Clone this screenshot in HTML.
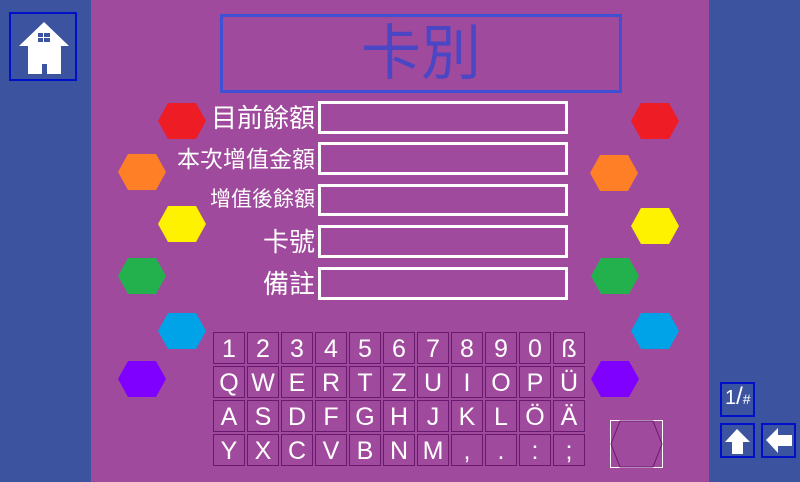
<!DOCTYPE html><html><head><meta charset="utf-8"><style>
body{margin:0;width:800px;height:482px;overflow:hidden;background:#a04a9e;position:relative;font-family:"Liberation Sans","Noto Sans CJK TC",sans-serif}
.a{position:absolute}
.side{background:#3c539f;top:0;height:482px;width:91px}
.k{position:absolute;width:32px;height:32px;border:1px solid #6a1a6e;box-sizing:border-box;color:#fff;font-size:25px;text-align:center;line-height:32px}
.in{position:absolute;left:318px;width:250px;border:3px solid #fff;box-sizing:border-box}
.lb{position:absolute;right:485px;color:#fff;white-space:nowrap;line-height:1}
.btn{position:absolute;border:2px solid #0010c8;box-sizing:border-box}
</style></head><body>
<div class="a side" style="left:0"></div><div class="a side" style="left:709px"></div>
<div class="btn" style="left:9px;top:12px;width:68px;height:69px">
<svg width="64" height="65" viewBox="0 0 64 65"><polygon points="8,32 33,8 58,32 50,32 50,60 17,60 17,32" fill="#fff"/><rect x="27" y="19" width="12" height="9" fill="#3c539f"/><rect x="32" y="19" width="1" height="9" fill="#fff"/><rect x="27" y="23" width="12" height="1" fill="#fff"/><rect x="31" y="50" width="5" height="10" fill="#3c539f"/></svg></div>
<div class="a" style="left:220px;top:14px;width:402px;height:79px;border:3px solid #4050d4;box-sizing:border-box;color:#4b46c4;font-size:60px;text-align:center;line-height:74px">卡別</div>
<div class="in" style="top:101px;height:33px"></div><div class="in" style="top:142px;height:33px"></div><div class="in" style="top:184px;height:32px"></div><div class="in" style="top:225px;height:33px"></div><div class="in" style="top:267px;height:33px"></div>
<div class="lb" style="top:105px;font-size:26px">目前餘額</div>
<div class="lb" style="top:148px;font-size:23px">本次增值金額</div>
<div class="lb" style="top:189px;font-size:21px">增值後餘額</div>
<div class="lb" style="top:229px;font-size:26px">卡號</div>
<div class="lb" style="top:271px;font-size:26px">備註</div>
<svg class="a" style="left:0;top:0" width="800" height="482">
<defs><polygon id="h" points="0,18 10,0 38,0 48,18 38,36 10,36"/></defs>
<use href="#h" x="158" y="103" fill="#ee1c24"/><use href="#h" x="118" y="154" fill="#ff7f27"/><use href="#h" x="158" y="206" fill="#fff200"/><use href="#h" x="118" y="258" fill="#22b14c"/><use href="#h" x="158" y="313" fill="#00a2e8"/><use href="#h" x="118" y="361" fill="#7f00ff"/>
<use href="#h" x="631" y="103" fill="#ee1c24"/><use href="#h" x="590" y="155" fill="#ff7f27"/><use href="#h" x="631" y="208" fill="#fff200"/><use href="#h" x="591" y="258" fill="#22b14c"/><use href="#h" x="631" y="313" fill="#00a2e8"/><use href="#h" x="591" y="361" fill="#7f00ff"/>
<rect x="610.5" y="420.5" width="52" height="47" fill="none" stroke="#fff"/>
<polygon points="620,421 653,421 662,444 653,467 620,467 611,444" fill="none" stroke="#6a1a6e"/>
</svg>
<div id="kb"></div>
<div class="btn" style="left:720px;top:382px;width:35px;height:35px;color:#fff;font-size:20px;line-height:26px;padding-left:3px">1<span style="font-size:24px">/</span><span style="font-size:14px">#</span></div>
<div class="btn" style="left:720px;top:423px;width:35px;height:35px"><svg width="31" height="31"><polygon points="15,4 28,17 21,17 21,29 10,29 10,17 3,17" fill="#fff"/></svg></div>
<div class="btn" style="left:761px;top:423px;width:35px;height:35px"><svg width="31" height="31"><polygon points="3,15 15,3 15,10 29,10 29,21 15,21 15,28" fill="#fff"/></svg></div>
<script>
var r=["1234567890ß","QWERTZUIOPÜ","ASDFGHJKLÖÄ","YXCVBNM,.:;"],h="";
for(var i=0;i<4;i++)for(var j=0;j<11;j++)h+='<div class="k" style="left:'+(213+34*j)+'px;top:'+(332+34*i)+'px">'+r[i][j]+'</div>';
document.getElementById("kb").innerHTML=h;
</script>
</body></html>
